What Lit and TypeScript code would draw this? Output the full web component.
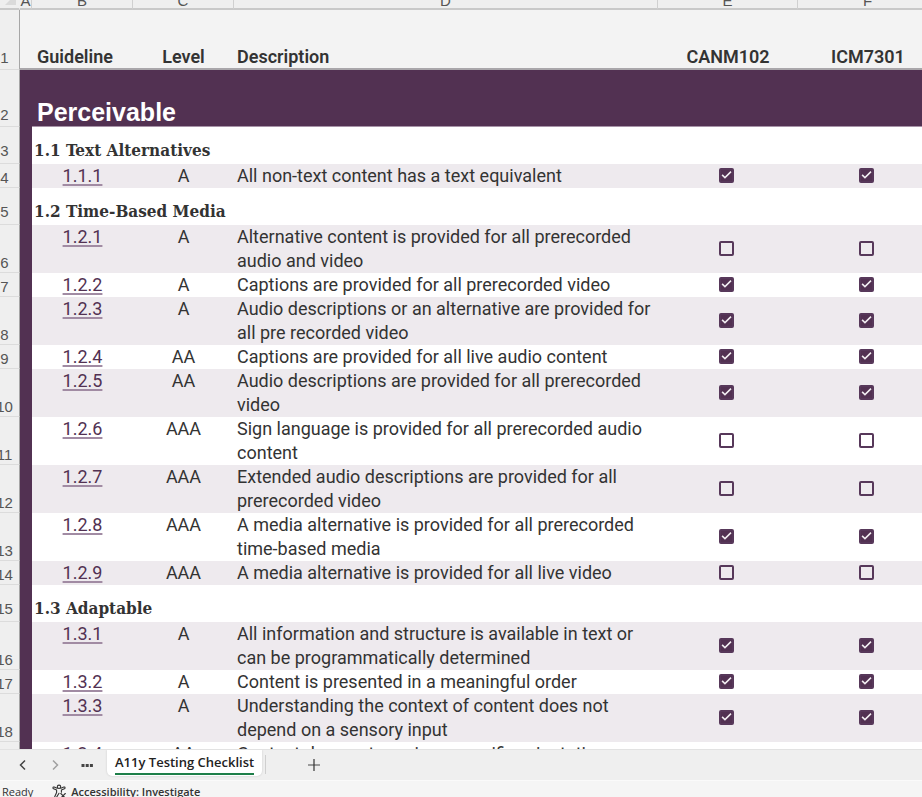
import { LitElement, html, css, nothing } from "lit";
import { customElement, property } from "lit/decorators.js";

type Criterion = {
  kind: "criterion";
  id: string;
  level: string;
  text: string;
  met: [boolean, boolean];
  tall?: boolean;
};
type Section = { kind: "section"; title: string };
type Row = Criterion | Section;

const courses = ["CANM102", "ICM7301"];

const section = (title: string): Section => ({ kind: "section", title });
const item = (id: string, level: string, text: string, met: boolean, tall = false): Criterion => ({
  kind: "criterion",
  id,
  level,
  text,
  met: [met, met],
  tall,
});

const rows: Row[] = [
  section("1.1 Text Alternatives"),
  item("1.1.1", "A", "All non-text content has a text equivalent", true),
  section("1.2 Time-Based Media"),
  item("1.2.1", "A", "Alternative content is provided for all prerecorded audio and video", false),
  item("1.2.2", "A", "Captions are provided for all prerecorded video", true),
  item("1.2.3", "A", "Audio descriptions or an alternative are provided for all pre recorded video", true),
  item("1.2.4", "AA", "Captions are provided for all live audio content", true),
  item("1.2.5", "AA", "Audio descriptions are provided for all prerecorded video", true),
  item("1.2.6", "AAA", "Sign language is provided for all prerecorded audio content", false),
  item("1.2.7", "AAA", "Extended audio descriptions are provided for all prerecorded video", false),
  item("1.2.8", "AAA", "A media alternative is provided for all prerecorded time-based media", true),
  item("1.2.9", "AAA", "A media alternative is provided for all live video", false),
  section("1.3 Adaptable"),
  item("1.3.1", "A", "All information and structure is available in text or can be programmatically determined", true),
  item("1.3.2", "A", "Content is presented in a meaningful order", true),
  item("1.3.3", "A", "Understanding the context of content does not depend on a sensory input", true),
  item("1.3.4", "AA", "Content does not require a specific orientation", false, true),
];

@customElement("check-sheet")
export class CheckSheet extends LitElement {
  static styles = css`
    :host {
      display: block;
      overflow: hidden;
      background: #fff;
    }
    /* The sheet is scrolled slightly past its top-left corner and runs on to the right. */
    .sheet {
      width: calc(100% + 26px);
      margin: -13px 0 0 -10px;
      table-layout: fixed;
      border-collapse: separate;
      border-spacing: 0;
      font: 400 18px/24px Roboto, "Liberation Sans", sans-serif;
      color: #333;
    }
    .sheet th,
    .sheet td {
      box-sizing: border-box;
      padding: 0;
      vertical-align: top;
      text-align: left;
      font-weight: 400;
    }
    .w-num { width: 30px; }
    .w-a { width: 12px; }
    .w-b { width: 101px; }
    .w-c { width: 101px; }
    .w-course { width: 140px; }

    .letters th {
      height: 23px;
      border-right: 1px solid #d0d0d0;
      border-bottom: 2px solid #c9c9c9;
      background: #efefef;
      color: #555;
      font: 400 15px/14px "Liberation Sans", sans-serif;
      text-align: center;
      vertical-align: bottom;
    }
    .letters .corner {
      border-right-color: #efefef;
    }
    .corner svg {
      display: block;
      margin: 0 3px 3px auto;
    }
    .sheet .num {
      border-right: 1px solid #a6a6a6;
      border-bottom: 1px solid #dcdcdc;
      background: #efefef;
      color: #555;
      font: 400 15px/18px "Liberation Sans", sans-serif;
      text-align: center;
      vertical-align: bottom;
    }
    .sheet .heads .num,
    .sheet .principle .num {
      line-height: 22px;
    }
    .sheet .section .num {
      line-height: 24px;
    }
    .heads th {
      height: 60px;
      border-bottom: 2px solid #a9a6aa;
      background: #f3f3f3;
      font-weight: 600;
      line-height: 22px;
      vertical-align: bottom;
    }
    .heads .num {
      background: #efefef;
    }
    .sheet .edge {
      background: #523152;
    }
    .sheet .heads .edge {
      background: #f3f3f3;
    }
    .sheet .pad { padding-left: 5px; }
    .sheet .desc { padding: 0 3px; }
    .sheet .center { text-align: center; }

    .principle td {
      height: 57px;
      border-bottom: 1px solid #a793a8;
      background: #523152;
      color: #fff;
      vertical-align: bottom;
    }
    .sheet .principle .edge {
      border-bottom-color: #523152;
    }
    .principle h1 {
      margin: 0;
      font: 700 25px/28px "Liberation Sans", sans-serif;
    }
    .section td {
      height: 37px;
      vertical-align: bottom;
    }
    .section h2 {
      margin: 0;
      padding: 0 0 0 2px;
      font: 700 17px/28px "Roboto Slab", "DejaVu Serif Condensed", "DejaVu Serif", serif;
      white-space: nowrap;
    }
    .band td {
      background: #eeeaee;
    }
    .tall td { height: 48px; }
    .sheet .mark {
      padding: 0 3px 2px 0;
      text-align: center;
      vertical-align: middle;
    }
    a {
      color: #523152;
      text-decoration: underline 2px #a18ba3;
      text-underline-offset: 2px;
      text-decoration-skip-ink: none;
    }
    .tick {
      appearance: none;
      display: grid;
      place-items: center;
      box-sizing: border-box;
      width: 15px;
      height: 15px;
      margin: 0 auto;
      border: 2px solid #57385a;
      border-radius: 2px;
      background: transparent;
    }
    .tick:checked {
      background: #523152;
    }
    .tick:checked::after {
      content: "";
      width: 11px;
      height: 11px;
      background: #f1edf1;
      clip-path: polygon(5% 54%, 15% 44%, 36% 64%, 86% 14%, 96% 24%, 36% 84%);
    }
  `;

  private renderRow(row: Row, index: number) {
    const num = html`<th class="num" scope="row">${index + 3}</th><td class="edge"></td>`;
    if (row.kind === "section") {
      return html`<tr class="section">${num}<td colspan="5"><h2>${row.title}</h2></td></tr>`;
    }
    const band = index % 2 === 1;
    return html`
      <tr class="${band ? "band" : ""} ${row.tall ? "tall" : ""}">
        ${num}
        <td class="center"><a href="#${row.id}">${row.id}</a></td>
        <td class="center">${row.level}</td>
        <td class="desc">${row.text}</td>
        ${row.met.map(
          (met, i) => html`<td class="mark">
            <input class="tick" type="checkbox" .checked=${met} aria-label="${courses[i]} meets ${row.id}" />
          </td>`
        )}
      </tr>
    `;
  }

  render() {
    return html`
      <table class="sheet">
        <colgroup>
          <col class="w-num" /><col class="w-a" /><col class="w-b" /><col class="w-c" /><col />
          <col class="w-course" /><col class="w-course" />
        </colgroup>
        <thead>
          <tr class="letters">
            <th class="corner">
              <svg width="11" height="11" viewBox="0 0 11 11" aria-hidden="true"><path d="M11 0V11H0Z" fill="#dadada" /></svg>
            </th>
            ${["A", "B", "C", "D", "E", "F"].map((c) => html`<th scope="col">${c}</th>`)}
          </tr>
          <tr class="heads">
            <th class="num" scope="row">1</th>
            <th class="edge"></th>
            <th class="pad" scope="col">Guideline</th>
            <th class="center" scope="col">Level</th>
            <th class="desc" scope="col">Description</th>
            ${courses.map((c) => html`<th class="center" scope="col">${c}</th>`)}
          </tr>
        </thead>
        <tbody>
          <tr class="principle">
            <th class="num" scope="row">2</th>
            <td class="edge"></td>
            <td class="pad" colspan="5"><h1>Perceivable</h1></td>
          </tr>
          ${rows.map((r, i) => this.renderRow(r, i))}
        </tbody>
      </table>
    `;
  }
}

@customElement("sheet-tabs")
export class SheetTabs extends LitElement {
  @property() active = "";

  static styles = css`
    :host {
      display: flex;
      align-items: stretch;
      height: 32px;
      box-sizing: border-box;
      border-top: 1px solid #e2e2e2;
      border-bottom: 1px solid #fafafa;
      background: #efefef;
      padding-left: 7px;
    }
    button {
      display: grid;
      place-items: center;
      width: 32px;
      padding: 0;
      border: 0;
      background: none;
      color: #444;
    }
    .dim { color: #a0a0a0; }
    .tab {
      display: block;
      width: auto;
      margin: 0 3px 4px 4px;
      padding: 0 8px;
      border-radius: 0 0 5px 5px;
      background: #fff;
      box-shadow: 0 0 2px #c4c4c4;
      color: #222;
      font: 600 13px/22px "Open Sans", "Noto Sans", sans-serif;
      clip-path: inset(0 -3px -3px -3px);
    }
    .name {
      display: block;
      border-bottom: 2px solid #1e7f49;
    }
    .split {
      width: 1px;
      margin: 5px 32px 6px 0;
      background: #cfcfcf;
    }
  `;

  render() {
    return html`
      <button aria-label="Previous sheet">
        <svg width="12" height="12" viewBox="0 0 12 12"><path d="M8 1.5 3.5 6 8 10.5" fill="none" stroke="currentColor" stroke-width="1.5" /></svg>
      </button>
      <button class="dim" aria-label="Next sheet">
        <svg width="12" height="12" viewBox="0 0 12 12"><path d="M4 1.5 8.5 6 4 10.5" fill="none" stroke="currentColor" stroke-width="1.5" /></svg>
      </button>
      <button aria-label="All sheets">
        <svg width="12" height="12" viewBox="0 0 12 12"><path d="M.5 5h3v3h-3zM4.7 5h3v3h-3zM8.9 5h3v3h-3z" fill="currentColor" /></svg>
      </button>
      <button class="tab" aria-current="page"><span class="name">${this.active || nothing}</span></button>
      <span class="split"></span>
      <button aria-label="New sheet">
        <svg width="12" height="12" viewBox="0 0 12 12"><path d="M0 6h12" stroke="#888" stroke-width="1.6" /><path d="M6 0v12" stroke="#333" stroke-width="1.2" /></svg>
      </button>
    `;
  }
}

@customElement("app-root")
export class AppRoot extends LitElement {
  static styles = css`
    :host {
      display: flex;
      flex-direction: column;
      height: 100vh;
      overflow: hidden;
    }
    check-sheet {
      flex: 1;
      min-height: 0;
    }
    .status {
      display: flex;
      align-items: flex-start;
      gap: 19px;
      height: 16px;
      box-sizing: border-box;
      padding: 2px 2px 0;
      overflow: hidden;
      background: #f5f5f5;
      color: #333;
      font: 400 11px/18px "Open Sans", "Noto Sans", sans-serif;
    }
    .access {
      display: flex;
      gap: 4px;
      padding: 0;
      border: 0;
      background: none;
      color: inherit;
      font: inherit;
      font-weight: 600;
    }
  `;

  render() {
    return html`
      <check-sheet></check-sheet>
      <sheet-tabs active="A11y Testing Checklist"></sheet-tabs>
      <footer class="status">
        <span>Ready</span>
        <button class="access">
          <svg width="15" height="16" viewBox="0 0 15 16" fill="none" stroke="#333" stroke-width="1.1" stroke-linejoin="round" stroke-linecap="round" aria-hidden="true">
            <circle cx="7" cy="3.8" r="1.7" />
            <path d="M5.200 5.200 2.200 4C.9 3.600.5 5.300 1.600 5.800L4.600 7.100V9.600L2.700 13.800C2.300 15 3.900 15.600 4.400 14.500L7 10.300M8.800 5.200 11.800 4C13.100 3.600 13.500 5.300 12.400 5.800L9.400 7.100V9.200" />
            <path d="m8.800 10.500 4.500 4.500m0-4.500-4.500 4.500" />
          </svg>
          Accessibility: Investigate
        </button>
      </footer>
    `;
  }
}
